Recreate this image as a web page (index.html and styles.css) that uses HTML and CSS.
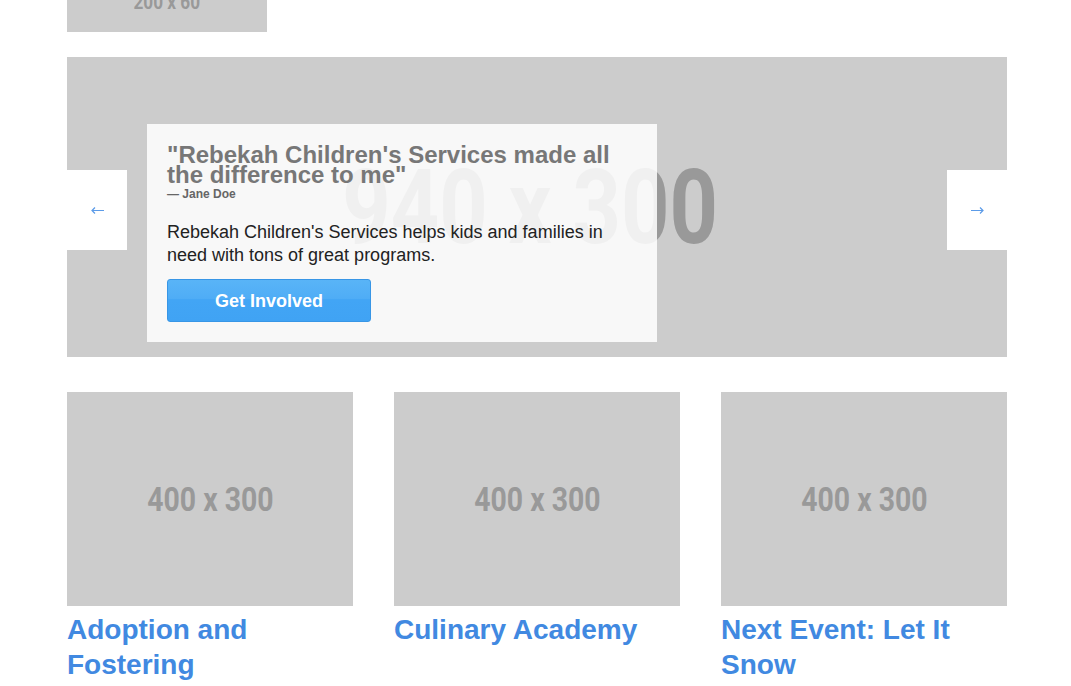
FILE: index.html
```html
<!DOCTYPE html>
<html lang="en">
<head>
    <meta charset="UTF-8">
    <title>Rebekah Children's Services</title>
    <link rel="stylesheet" href="styles.css">
</head>
<body>
    <div class="container">
        <div class="logo placeholder"><span>200 x 60</span></div>

        <div class="hero placeholder">
            <div class="hero-label"><span>940 x 300</span></div>
            <a class="arrow" href="#">
                <svg width="13" height="7" viewBox="0 0 13 7"><path d="M1 3.5H13M4 0.5L1 3.5L4 6.5" fill="none" stroke="#5b9be8" stroke-width="1.2"/></svg>
            </a>
            <div class="caption">
                <h2>"Rebekah Children's Services made all the difference to me"</h2>
                <div class="cite">&mdash; Jane Doe</div>
                <p>Rebekah Children's Services helps kids and families in need with tons of great programs.</p>
                <a class="btn" href="#">Get Involved</a>
            </div>
            <a class="arrow arrow-right" href="#">
                <svg width="13" height="7" viewBox="0 0 13 7"><path d="M0 3.5H12M9 0.5L12 3.5L9 6.5" fill="none" stroke="#5b9be8" stroke-width="1.2"/></svg>
            </a>
        </div>

        <div class="cards">
            <div class="card">
                <div class="thumb placeholder"><span>400 x 300</span></div>
                <h3>Adoption and Fostering</h3>
            </div>
            <div class="card">
                <div class="thumb placeholder"><span>400 x 300</span></div>
                <h3>Culinary Academy</h3>
            </div>
            <div class="card">
                <div class="thumb placeholder"><span>400 x 300</span></div>
                <h3>Next Event: Let It Snow</h3>
            </div>
        </div>
    </div>
</body>
</html>
```

FILE: styles.css
```css
body {
    margin: 0;
    font-family: "Liberation Sans", Arial, sans-serif;
    background: #fff;
    overflow: hidden;
}
.container {
    width: 940px;
    margin-left: 67px;
}
.placeholder {
    background-color: #cccccc;
    color: #999999;
    font-family: Roboto, sans-serif;
    display: flex;
    align-items: center;
    justify-content: center;
}
.placeholder span {
    display: inline-block;
    font-weight: bold;
    transform: scaleX(0.86);
    white-space: nowrap;
}
.logo {
    width: 200px;
    height: 60px;
    margin-top: -28px;
    font-size: 20px;
}
.hero {
    position: relative;
    height: 300px;
    margin-top: 25px;
    justify-content: flex-start;
}
.hero-label {
    position: absolute;
    inset: 0;
    display: flex;
    align-items: center;
    justify-content: center;
    font-size: 103px;
    padding-right: 14px;
}
.hero-label span {
    transform: scaleX(0.82);
}
.arrow {
    position: relative;
    width: 60px;
    height: 80px;
    background: #fff;
    display: flex;
    align-items: center;
    justify-content: center;
    align-self: flex-start;
    margin-top: 113px;
}
.arrow svg {
    margin-left: 1px;
}
.arrow-right {
    margin-left: auto;
}
.caption {
    position: relative;
    align-self: flex-start;
    margin-top: 67px;
    margin-left: 20px;
    width: 470px;
    padding: 20px;
    background: rgba(255, 255, 255, 0.85);
    font-family: "Liberation Sans", Arial, sans-serif;
    font-weight: normal;
}
.caption h2 {
    margin: 0;
    color: #777;
    font-size: 24px;
    line-height: 20px;
    padding-top: 1px;
}
.cite {
    color: #666;
    font-size: 12px;
    font-weight: bold;
    line-height: 14px;
    margin-top: 2px;
}
.caption p {
    margin: 20px 0 12px;
    color: #222;
    font-size: 18px;
    line-height: 23px;
}
.btn {
    display: block;
    width: 202px;
    height: 41px;
    line-height: 42px;
    text-align: center;
    color: #fff;
    font-size: 18px;
    font-weight: bold;
    text-decoration: none;
    border: 1px solid #3896e6;
    border-radius: 3px;
    background: linear-gradient(#59b4f7 0, #4fadf6 45%, #42a5f5 48%, #40a3f4 100%);
}
.cards {
    display: flex;
    gap: 41px;
    margin-top: 35px;
}
.card {
    width: 286px;
}
.thumb {
    height: 214px;
    font-size: 33px;
}
.card h3 {
    margin: 6px 0 0;
    color: #4189e1;
    font-size: 28px;
    line-height: 35px;
}
```
